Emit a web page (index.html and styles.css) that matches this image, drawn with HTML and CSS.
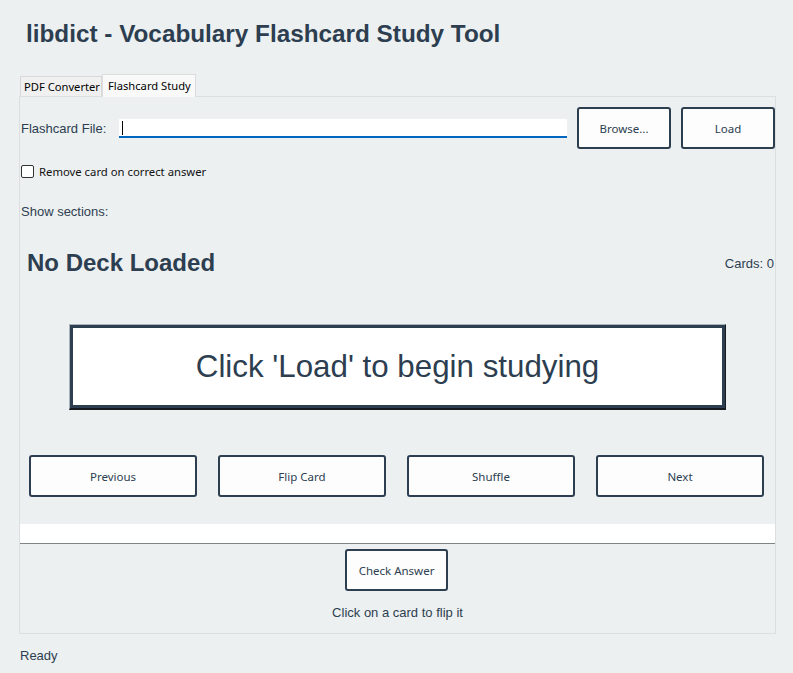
FILE: index.html
```html
<!DOCTYPE html>
<html lang="en">
<head>
<meta charset="utf-8">
<title>libdict - Vocabulary Flashcard Study Tool</title>
<link rel="stylesheet" href="styles.css">
</head>
<body>
<h1 class="title">libdict - Vocabulary Flashcard Study Tool</h1>
<div class="notebook">
  <div class="tabs">
    <div class="tab">PDF Converter</div>
    <div class="tab tab-active">Flashcard Study</div>
  </div>
  <div class="pane">
    <div class="file-row">
      <label class="lbl file-lbl">Flashcard File:</label>
      <div class="entry"><span class="caret"></span></div>
      <button class="btn btn-small">Browse...</button>
      <button class="btn btn-small">Load</button>
    </div>
    <div class="check-row">
      <span class="checkbox"></span>
      <span class="check-lbl">Remove card on correct answer</span>
    </div>
    <div class="lbl sections">Show sections:</div>
    <div class="deck-row">
      <span class="deck-title">No Deck Loaded</span>
      <span class="lbl">Cards: 0</span>
    </div>
    <div class="card-outer">
      <div class="card">Click 'Load' to begin studying</div>
    </div>
    <div class="nav-row">
      <button class="btn btn-nav">Previous</button>
      <button class="btn btn-nav">Flip Card</button>
      <button class="btn btn-nav">Shuffle</button>
      <button class="btn btn-nav">Next</button>
    </div>
    <div class="answer-strip"></div>
    <div class="check-wrap">
      <button class="btn btn-check">Check Answer</button>
    </div>
    <div class="lbl hint">Click on a card to flip it</div>
  </div>
</div>
<div class="lbl status">Ready</div>
</body>
</html>
```
FILE: styles.css
```css
html, body {
  margin: 0;
  padding: 0;
  background: #ecf0f1;
}
body {
  font-family: "Liberation Sans", Arial, sans-serif;
  color: #2c3e50;
  width: 793px;
  height: 673px;
  overflow: hidden;
}
.title {
  margin: 0;
  padding: 20px 0 0 26px;
  font-size: 24.3px;
  font-weight: 700;
  line-height: 28px;
  color: #2c3e50;
}
.notebook {
  margin: 26px 0 0 19px;
  width: 757px;
}
.tabs {
  display: flex;
  align-items: flex-end;
  height: 22px;
  padding-left: 1px;
  position: relative;
  z-index: 1;
}
.tab {
  font-family: "Noto Sans", "Open Sans", sans-serif;
  font-size: 11.2px;
  color: #000;
  height: 20px;
  line-height: 20px;
  padding: 0 0 0 3px;
  border: 1px solid #d9d9d9;
  border-bottom: none;
  background: #f0f0f0;
  box-sizing: border-box;
  width: 82px;
  white-space: nowrap;
}
.tab-active {
  height: 23px;
  line-height: 22px;
  width: 94px;
  padding: 0 5px;
  margin-bottom: -1px;
  background: #f9f9f9;
  border-color: #dcdcdc;
}
.pane {
  border: 1px solid #dcdfe0;
  padding: 10px 0 12px 0;
}
.lbl {
  font-size: 13px;
  color: #2c3e50;
}
.file-row {
  display: flex;
  align-items: center;
  height: 42px;
}
.file-lbl {
  width: 98px;
  margin-left: 1px;
}
.entry {
  flex: 1;
  background: #fff;
  border-bottom: 2px solid #0067c0;
  box-sizing: border-box;
  height: 19px;
  margin-right: 10px;
  position: relative;
}
.caret {
  position: absolute;
  left: 3px;
  top: 2px;
  width: 1px;
  height: 14px;
  background: #000;
}
.btn {
  font-family: "Noto Sans", "Open Sans", sans-serif;
  font-size: 11.5px;
  color: #2c3e50;
  background: #fdfdfd;
  border: 2px solid #2c3e50;
  border-radius: 3px;
  box-sizing: border-box;
  height: 42px;
  padding: 0;
  cursor: pointer;
}
.btn-small {
  width: 94px;
}
.btn-small + .btn-small {
  margin-left: 10px;
}
.check-row {
  display: flex;
  align-items: center;
  height: 20px;
  margin-top: 12px;
  padding-left: 1px;
}
.checkbox {
  width: 13px;
  height: 13px;
  border: 1px solid #333;
  border-radius: 2px;
  background: #fff;
  box-sizing: border-box;
  margin-right: 5px;
}
.check-lbl {
  font-family: "Noto Sans", "Open Sans", sans-serif;
  font-size: 11.3px;
  color: #111;
}
.sections {
  margin-top: 21px;
  height: 20px;
  line-height: 20px;
  padding-left: 1px;
}
.deck-row {
  display: flex;
  justify-content: space-between;
  align-items: center;
  height: 30px;
  margin-top: 26px;
  padding: 0 1px 0 7px;
}
.deck-title {
  font-size: 24px;
  font-weight: 700;
  line-height: 30px;
}
.card-outer {
  margin: 46px 49px 0 49px;
  border-style: solid;
  border-width: 1px 1px 2px 1px;
  border-color: #a9b2bb #151a20 #151a20 #a9b2bb;
}
.card {
  height: 77px;
  border: 3px solid #2c3e50;
  background: #fff;
  display: flex;
  align-items: center;
  justify-content: center;
  font-size: 31.3px;
  color: #2c3e50;
}
.nav-row {
  display: flex;
  gap: 21px;
  margin-top: 45px;
  padding: 0 10px 0 9px;
}
.btn-nav {
  width: 168px;
}
.answer-strip {
  margin-top: 27px;
  height: 19px;
  background: #fff;
  border-bottom: 1px solid #7f8487;
}
.check-wrap {
  display: flex;
  justify-content: center;
  margin-top: 5px;
  padding-right: 2px;
}
.btn-check {
  width: 103px;
}
.hint {
  margin-top: 14px;
  height: 16px;
  line-height: 16px;
  text-align: center;
}
.status {
  margin-top: 14px;
  padding-left: 20px;
  line-height: 16px;
}
```
